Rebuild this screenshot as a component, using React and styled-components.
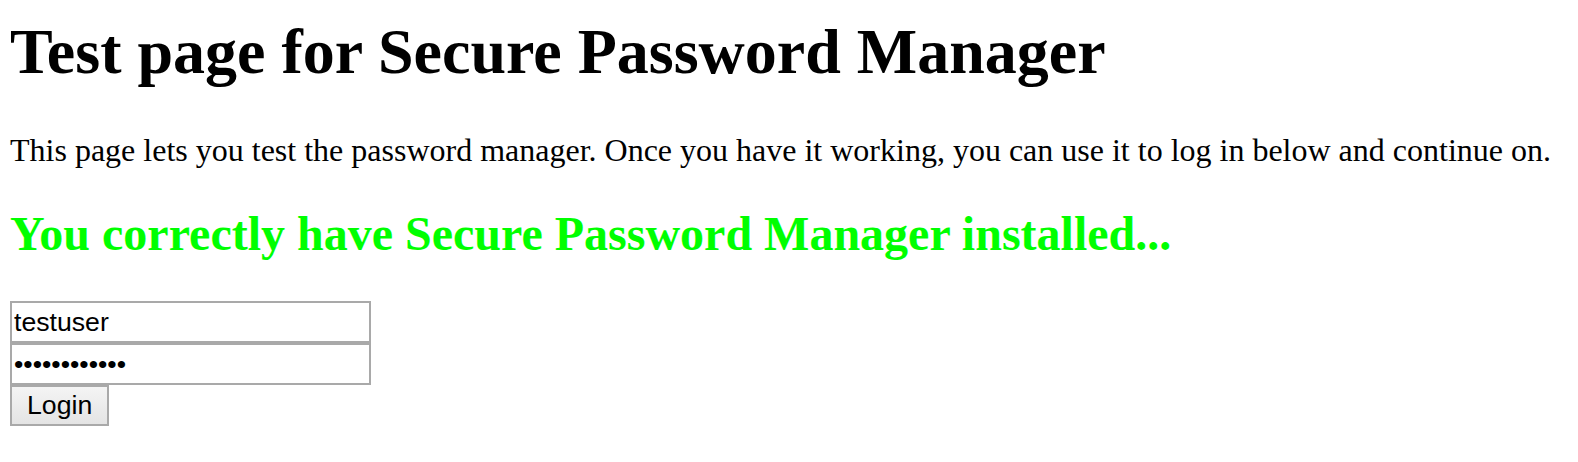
import React from 'react';
import styled, { createGlobalStyle } from 'styled-components';

const GlobalStyle = createGlobalStyle`
  html, body {
    margin: 0;
    padding: 0;
    background: #fff;
  }
  body {
    font-family: "Liberation Serif", "Times New Roman", serif;
    font-size: 32px;
    color: #000;
  }
`;

const Page = styled.div`
  padding: 15px 10px 0 10px;
`;

const Title = styled.h1`
  font-size: 64px;
  font-weight: bold;
  margin: 0 0 43px 0;
  line-height: normal;
`;

const Intro = styled.p`
  font-size: 32px;
  margin: 0;
`;

const Status = styled.h2`
  font-size: 48px;
  font-weight: bold;
  color: #00ff00;
  margin: 37px 0 40px 0;
`;

const LoginForm = styled.form`
  display: flex;
  flex-direction: column;
  align-items: flex-start;
  margin: 0;
`;

const Field = styled.input`
  display: block;
  box-sizing: border-box;
  width: 361px;
  height: 42px;
  margin: 0;
  padding: 1px 2px;
  border: 2px solid #a9a9a9;
  border-radius: 0;
  font-family: "Liberation Sans", Arial, sans-serif;
  font-size: 26.67px;
  color: #000;
  background: #fff;
  outline: none;
`;

const Submit = styled.button`
  box-sizing: border-box;
  height: 41px;
  margin: 0;
  padding: 2px 15px;
  border: 2px solid #a9a9a9;
  border-radius: 0;
  background: linear-gradient(#f4f4f4, #e4e4e4);
  font-family: "Liberation Sans", Arial, sans-serif;
  font-size: 26.67px;
  color: #000;
  cursor: pointer;
`;

const App = () => {
  return (
    <>
      <GlobalStyle />
      <Page>
        <Title>Test page for Secure Password Manager</Title>
        <Intro>
          This page lets you test the password manager. Once you have it working, you can use it to log in below and continue on.
        </Intro>
        <Status>You correctly have Secure Password Manager installed...</Status>
        <LoginForm onSubmit={e => e.preventDefault()}>
          <Field type="text" defaultValue="testuser" />
          <Field type="password" defaultValue="secretpasswd" />
          <Submit type="submit">Login</Submit>
        </LoginForm>
      </Page>
    </>
  );
};

export default App;
